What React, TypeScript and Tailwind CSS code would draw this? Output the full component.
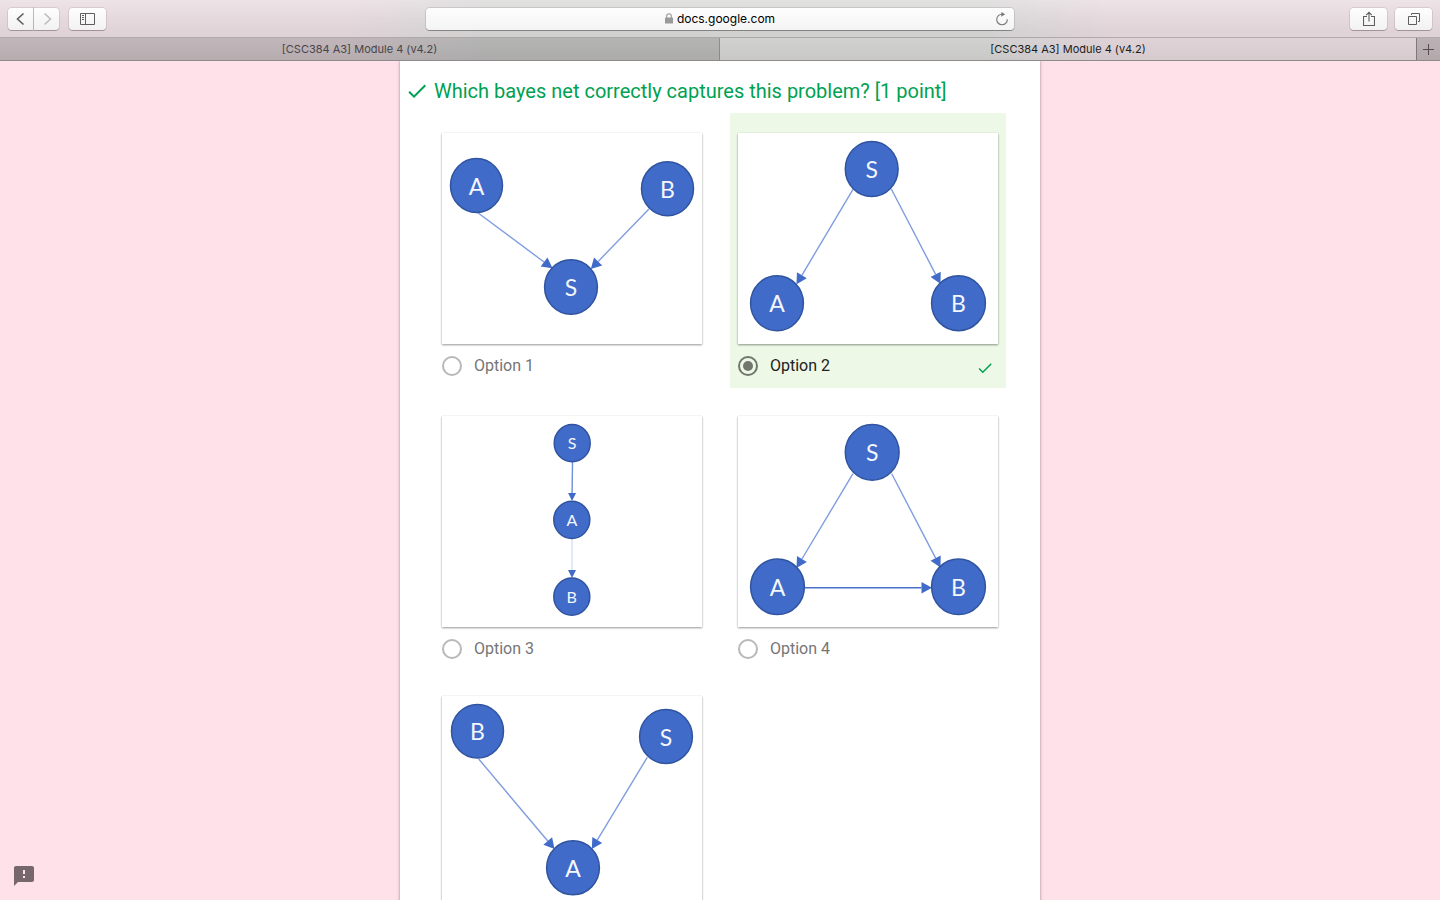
import React, { useState } from "react";

type NetNode = { label: string; x: number; y: number; rx: number; ry: number };
type NetEdge = { from: [number, number]; to: [number, number]; color: string; width?: number };
type Net = { name: string; correct?: boolean; small?: boolean; nodes: NetNode[]; edges: NetEdge[] };

const SOFT = "#809de0";
const FULL = "#4a70c8";

const nets: Net[] = [
  {
    name: "Option 1",
    nodes: [
      { label: "A", x: 34.5, y: 52.5, rx: 26, ry: 27 },
      { label: "B", x: 225.5, y: 55.7, rx: 26, ry: 27 },
      { label: "S", x: 129, y: 154, rx: 26.4, ry: 27.2 },
    ],
    edges: [
      { from: [35.5, 79.5], to: [110.5, 135.3], color: SOFT },
      { from: [207, 76], to: [148.8, 136], color: SOFT },
    ],
  },
  {
    name: "Option 2",
    correct: true,
    nodes: [
      { label: "S", x: 133.7, y: 36, rx: 26.4, ry: 27.5 },
      { label: "A", x: 39, y: 170.2, rx: 26.4, ry: 27.5 },
      { label: "B", x: 220.5, y: 170.2, rx: 26.9, ry: 27.5 },
    ],
    edges: [
      { from: [115, 56.3], to: [58.5, 151.3], color: SOFT },
      { from: [153.3, 56], to: [202.5, 150.7], color: SOFT },
    ],
  },
  {
    name: "Option 3",
    small: true,
    nodes: [
      { label: "S", x: 130.2, y: 27.2, rx: 18, ry: 18.6 },
      { label: "A", x: 129.8, y: 103.8, rx: 18, ry: 18.6 },
      { label: "B", x: 129.8, y: 180.7, rx: 18, ry: 18.6 },
    ],
    edges: [
      { from: [130.5, 46], to: [130, 85], color: "#6f90da" },
      { from: [130, 123], to: [130, 162], color: "#e2e8fa", width: 2 },
    ],
  },
  {
    name: "Option 4",
    nodes: [
      { label: "S", x: 134.2, y: 36.4, rx: 26.9, ry: 27.8 },
      { label: "A", x: 39.5, y: 170.8, rx: 26.9, ry: 27.8 },
      { label: "B", x: 220.5, y: 170.8, rx: 26.9, ry: 27.8 },
    ],
    edges: [
      { from: [115, 57.7], to: [58.5, 152], color: SOFT },
      { from: [153.7, 57.7], to: [202.5, 151.5], color: SOFT },
      { from: [67, 171.8], to: [194, 171.8], color: FULL },
    ],
  },
  {
    name: "Option 5",
    nodes: [
      { label: "B", x: 35.5, y: 35.3, rx: 26, ry: 26.8 },
      { label: "S", x: 224, y: 40.5, rx: 26.4, ry: 27 },
      { label: "A", x: 131, y: 171.8, rx: 26.4, ry: 27 },
    ],
    edges: [
      { from: [36.7, 63], to: [112.5, 153], color: SOFT },
      { from: [205.3, 61.3], to: [149.8, 153], color: SOFT },
    ],
  },
];

function Arrow({ edge, small }: { edge: NetEdge; small?: boolean }) {
  const [x1, y1] = edge.from;
  const [x2, y2] = edge.to;
  const length = Math.hypot(x2 - x1, y2 - y1);
  const ux = (x2 - x1) / length;
  const uy = (y2 - y1) / length;
  const head = small ? 8 : 10.5;
  const half = small ? 4 : 5.7;
  const bx = x2 - ux * head;
  const by = y2 - uy * head;
  return (
    <g>
      <line x1={x1} y1={y1} x2={bx} y2={by} stroke={edge.color} strokeWidth={edge.width ?? 1.4} />
      <polygon
        points={`${x2},${y2} ${bx - uy * half},${by + ux * half} ${bx + uy * half},${by - ux * half}`}
        fill="#406bc9"
      />
    </g>
  );
}

function Diagram({ net }: { net: Net }) {
  return (
    <svg viewBox="0 0 260 211" className="block w-full" role="img" aria-label={`${net.name} diagram`}>
      {net.edges.map((edge, i) => (
        <Arrow key={i} edge={edge} small={net.small} />
      ))}
      {net.nodes.map((n) => (
        <g key={n.label}>
          <ellipse cx={n.x} cy={n.y} rx={n.rx} ry={n.ry} fill="#406bc9" stroke="#30549f" strokeWidth="1.5" />
          <text
            x={n.x}
            y={n.y + (net.small ? 6 : 9)}
            textAnchor="middle"
            fill="#f4f7fd"
            className={net.small ? "font-['Lato',sans-serif] text-[16px]" : "font-['Lato',sans-serif] text-[23px]"}
          >
            {n.label}
          </text>
        </g>
      ))}
    </svg>
  );
}

function Check({ className }: { className: string }) {
  return (
    <svg viewBox="0 0 24 24" className={className} fill="#00a152" aria-hidden="true">
      <path d="M9 16.17L4.83 12l-1.42 1.41L9 19 21 7l-1.41-1.41z" />
    </svg>
  );
}

const barButton =
  "flex h-[22px] items-center justify-center bg-linear-to-b from-[#fefefe] to-[#f3f1f2] text-[#5f5d5e] shadow-[0_0_0_1px_rgba(90,60,70,0.13),0_1px_0_rgba(60,40,50,0.3)]";

function Toolbar() {
  return (
    <div className="grid h-[38px] grid-cols-[1fr_minmax(0,588px)_1fr] items-center border-b border-black/25 bg-linear-to-b from-white/15 to-black/5 px-2">
      <div className="flex items-center">
        <button aria-label="Back" className={`${barButton} w-[25px] rounded-l`}>
          <svg width="12" height="14" viewBox="0 0 12 14" fill="none" stroke="currentColor" strokeWidth="1.6">
            <path d="M8.500 1.500L2.500 7l6 5.500" />
          </svg>
        </button>
        <button aria-label="Forward" disabled className={`${barButton} ml-px w-[25px] rounded-r`}>
          <svg width="12" height="14" viewBox="0 0 12 14" fill="none" stroke="#bdbbbc" strokeWidth="1.6">
            <path d="M3.500 1.500L9.500 7l-6 5.500" />
          </svg>
        </button>
        <button aria-label="Show sidebar" className={`${barButton} ml-[10px] w-[37px] rounded`}>
          <svg width="15" height="12" viewBox="0 0 15 12" fill="none" stroke="currentColor">
            <path d="M.5.5h14v11H.5zM5.500.5v11M2 2.500h2M2 4.500h2M2 6.500h2" />
          </svg>
        </button>
      </div>
      <div className="relative flex h-[22px] items-center justify-center gap-1 rounded bg-linear-to-b from-[#fdfdfd] to-[#f4f4f4] shadow-[0_0_0_1px_rgba(0,0,0,0.1),0_1px_0_rgba(0,0,0,0.3)]">
        <svg width="8" height="11" viewBox="0 0 8 11" aria-hidden="true">
          <rect y="4.5" width="8" height="6" rx="0.6" fill="#999" />
          <path d="M1.700 5V3a2.300 2.300 0 0 1 4.600 0v2" fill="none" stroke="#999" strokeWidth="1.1" />
        </svg>
        <input
          aria-label="Address"
          defaultValue="docs.google.com"
          className="h-[22px] bg-transparent p-0 text-[12px] text-black outline-none [field-sizing:content]"
        />
        <button aria-label="Reload" className="absolute right-[5px] top-1 text-[#777]">
          <svg width="14" height="14" viewBox="0 0 14 14" fill="none" stroke="currentColor" strokeWidth="1.1">
            <path d="M12.300 7.200A5.300 5.300 0 1 1 7.300 2.200" />
            <path d="M6.300 0l3.900 2.300-3.900 2.400z" fill="currentColor" stroke="none" />
          </svg>
        </button>
      </div>
      <div className="flex items-center justify-end gap-2">
        <button aria-label="Share" className={`${barButton} w-[37px] rounded`}>
          <svg width="12" height="16" viewBox="0 0 12 16" fill="none" stroke="currentColor" strokeWidth="1.1">
            <path d="M4 5.500H.5v9h11v-9H8M6 10.500V1.500M3.200 4.200L6 1.300l2.800 2.900" />
          </svg>
        </button>
        <button aria-label="Show all tabs" className={`${barButton} w-[37px] rounded`}>
          <svg width="12" height="12" viewBox="0 0 12 12" fill="none" stroke="currentColor">
            <path d="M.5 3.500h8v8h-8zM3.500 2V.5h8v8H10" />
          </svg>
        </button>
      </div>
    </div>
  );
}

function Tabs() {
  return (
    <div role="tablist" className="grid h-[23px] grid-cols-2 border-b border-[#918a8d] text-[11px]">
      <button
        role="tab"
        aria-selected="false"
        className="border-r border-black/20 bg-linear-to-b from-black/18 to-black/22 text-[#48454a]"
      >
        [CSC384 A3] Module 4 (v4.2)
      </button>
      <div className="flex bg-linear-to-b from-black/5 to-black/9">
        <button role="tab" aria-selected="true" className="flex-1 text-[#1c1c1c]">
          [CSC384 A3] Module 4 (v4.2)
        </button>
        <button
          aria-label="New tab"
          className="flex w-6 items-center justify-center border-l border-black/30 bg-black/16 text-[#554b50]"
        >
          <svg width="11" height="11" viewBox="0 0 11 11" stroke="currentColor">
            <path d="M5.500 0v11M0 5.500h11" />
          </svg>
        </button>
      </div>
    </div>
  );
}

export default function App() {
  const [picked, setPicked] = useState("Option 2");
  return (
    <div className="flex h-screen flex-col overflow-hidden bg-[#ffe1ea] font-['Roboto',sans-serif]">
      <header className="shrink-0 bg-[linear-gradient(to_right,#ebdee3_24%,#dcdcdb_34%,#dcdcdb_68%,#ebdee3_77%)] font-['Inter',sans-serif]">
        <Toolbar />
        <Tabs />
      </header>
      <main className="min-h-0 flex-1 overflow-y-auto [scrollbar-width:none]">
        <fieldset className="mx-auto w-full max-w-[640px] bg-white pb-10 pt-4 shadow-[0_0_3px_rgba(0,0,0,0.4)]">
          <legend className="contents">
            <span className="flex items-center pl-[5px] text-[20px] leading-7 text-[#00a152]">
              <Check className="mr-[5px] h-6 w-6" />
              Which bayes net correctly captures this problem? [1 point]
            </span>
          </legend>
          <div className="mt-2 grid grid-cols-2 gap-x-5 gap-y-2 px-[34px]">
            {nets.map((net) => (
              <label
                key={net.name}
                className={net.correct ? "block bg-[#edf8e7] px-2 pb-3 pt-5" : "block px-2 pb-[9px] pt-5"}
              >
                <div className="bg-white shadow-[0_1px_2px_rgba(0,0,0,0.4),0_0_1px_rgba(0,0,0,0.1)]">
                  <Diagram net={net} />
                </div>
                <div className="mt-3 flex h-5 items-center">
                  <input
                    type="radio"
                    name="bayes-net"
                    checked={picked === net.name}
                    onChange={() => setPicked(net.name)}
                    className="flex h-5 w-5 appearance-none items-center justify-center rounded-full border-2 border-[#b8b8b8] checked:border-[#71776d] checked:before:h-[10px] checked:before:w-[10px] checked:before:rounded-full checked:before:bg-[#71776d] checked:before:content-['']"
                  />
                  <span
                    className={
                      net.correct
                        ? "ml-3 text-[16px] leading-[22px] text-[#212121]"
                        : "ml-3 text-[16px] leading-[22px] text-[#757575]"
                    }
                  >
                    {net.name}
                  </span>
                  {net.correct && <Check className="ml-auto mr-1 mt-1 h-[18px] w-[18px]" />}
                </div>
              </label>
            ))}
          </div>
        </fieldset>
      </main>
      <button aria-label="Report a problem" className="fixed bottom-3 left-3">
        <svg width="24" height="24" viewBox="0 0 24 24" fill="#75676c">
          <path d="M20 2H4c-1.100 0-1.990.9-1.990 2L2 22l4-4h14c1.100 0 2-.9 2-2V4c0-1.100-.9-2-2-2zm-7 12h-2v-2h2v2zm0-4h-2V6h2v4z" />
        </svg>
      </button>
    </div>
  );
}
